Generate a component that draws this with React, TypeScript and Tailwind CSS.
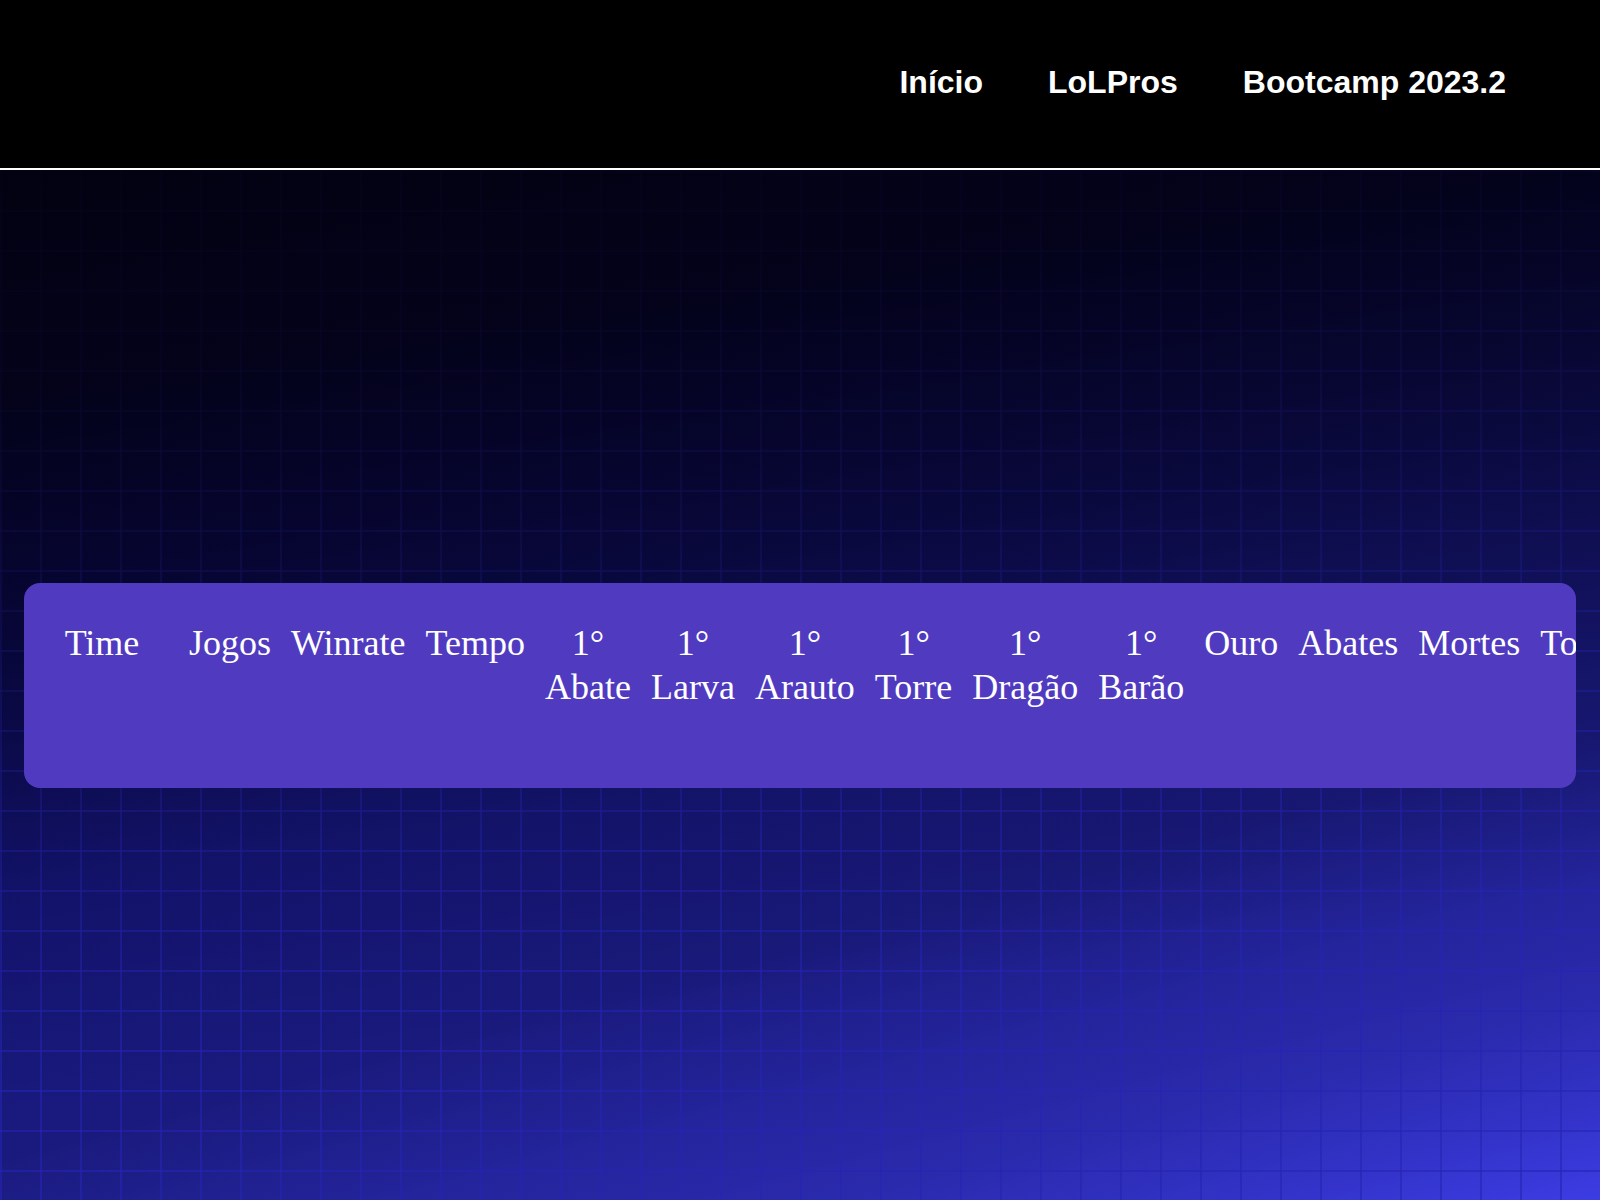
import React from 'react';

const colunas = [
    'Jogos',
    'Winrate',
    'Tempo',
    '1° Abate',
    '1° Larva',
    '1° Arauto',
    '1° Torre',
    '1° Dragão',
    '1° Barão',
    'Ouro',
    'Abates',
    'Mortes',
    'Torres',
    'Dragões',
    'Barões',
];

const App = () => {
    return (
        <div className="min-h-[1200px] bg-black font-['Liberation_Sans',Arial,sans-serif]">
            {/* Header */}
            <header className="h-[170px] bg-black border-b-2 border-white flex items-center justify-end pb-[4px] pr-[94px]">
                <nav>
                    <ul className="flex gap-[65px] text-white text-[32px] font-bold">
                        <li>Início</li>
                        <li>LoLPros</li>
                        <li>Bootcamp 2023.2</li>
                    </ul>
                </nav>
            </header>

            {/* Conteudo: fundo em gradiente com grade */}
            <main className="h-[1030px] flex items-center px-[24px] [background-image:linear-gradient(172deg,rgba(2,1,14,0.95)_0%,rgba(2,1,14,0.85)_18%,rgba(2,1,14,0.55)_38%,rgba(2,1,14,0.18)_58%,rgba(2,1,14,0)_75%),linear-gradient(to_right,rgba(36,36,180,0.6)_2px,transparent_2px),linear-gradient(to_bottom,rgba(36,36,180,0.6)_2px,transparent_2px),linear-gradient(165deg,#0a0850_0%,#0d0b69_29.5%,#16167d_50%,#1a1a7e_68%,#24249c_78%,#2a2aad_86%,#3232c6_93%,#3c3ce4_100%)] [background-size:100%_100%,40px_40px,40px_40px,100%_100%]">
                <div className="w-full h-[205px] bg-[#503bc0] rounded-2xl overflow-hidden pt-[26px]">
                    <table className="border-separate border-spacing-[2px] text-white font-['Liberation_Serif','Times_New_Roman',serif] text-[36px] leading-[44px]">
                        <thead>
                            <tr>
                                <th className="w-[152px] min-w-[152px] px-[9px] py-[10px] font-normal text-center align-top">
                                    Time
                                </th>
                                {colunas.map((c) => (
                                    <th key={c} className="px-[9px] py-[10px] font-normal text-center align-top">
                                        {c}
                                    </th>
                                ))}
                            </tr>
                        </thead>
                        <tbody></tbody>
                    </table>
                </div>
            </main>
        </div>
    );
};

export default App;
